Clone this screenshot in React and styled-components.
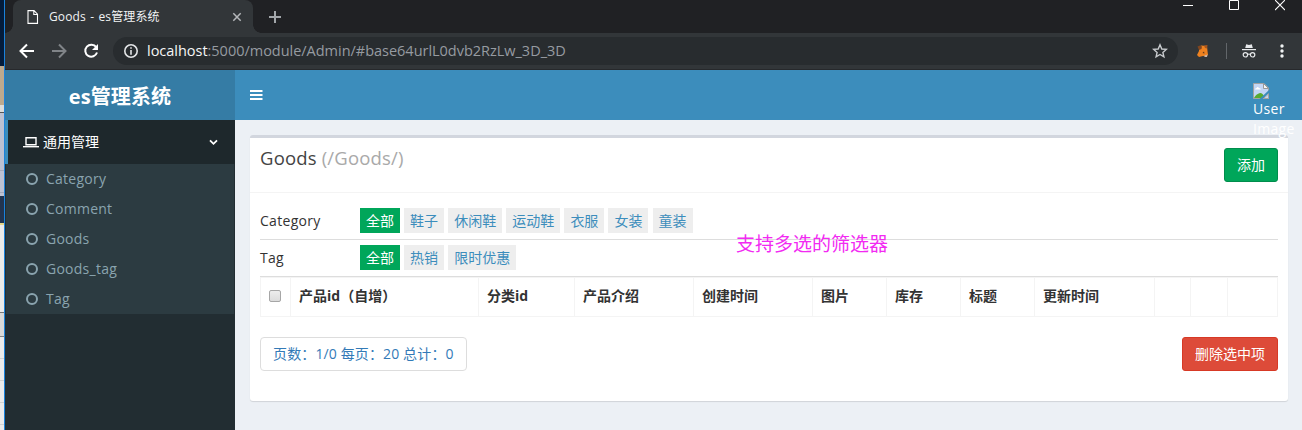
import React from "react";
import styled, { createGlobalStyle } from "styled-components";

const GlobalStyle = createGlobalStyle`
  *, *::before, *::after { box-sizing: border-box; }
  body {
    margin: 0;
    font-family: "Open Sans", "Noto Sans CJK SC", sans-serif;
    font-size: 14px;
    line-height: 20px;
    color: #333;
    overflow: hidden;
  }
`;

const Screen = styled.div`
  display: flex;
  width: 1302px;
  height: 430px;
  overflow: hidden;
`;

const Desktop = styled.div`
  width: 4px;
  flex: none;
  display: flex;
  flex-direction: column;
`;
const Strip = styled.div`
  flex: none;
  height: ${(p) => p.$h}px;
  background: ${(p) => p.$c};
`;

const Browser = styled.div`
  flex: 1;
  min-width: 0;
  border-left: 1px solid #1a82dc;
  display: flex;
  flex-direction: column;
`;

const TabBar = styled.div`
  display: flex;
  height: 33px;
  padding-left: 8px;
  background: #202124;
`;
const Tab = styled.div`
  position: relative;
  display: flex;
  align-items: center;
  width: 240px;
  padding: 0 11px 0 14px;
  background: #323639;
  border-radius: 8px 8px 0 0;
  color: #f1f3f4;
  font-size: 12px;
  &::before, &::after {
    content: "";
    position: absolute;
    bottom: 0;
    width: 8px;
    height: 8px;
  }
  &::before {
    left: -8px;
    background: radial-gradient(circle at 0 0, transparent 7.5px, #323639 8px);
  }
  &::after {
    right: -8px;
    background: radial-gradient(circle at 100% 0, transparent 7.5px, #323639 8px);
  }
`;
const TabTitle = styled.span`
  flex: 1;
  margin-left: 10px;
  white-space: nowrap;
  word-spacing: 1.2px;
  letter-spacing: 0.1px;
`;
const NewTab = styled.div`
  display: flex;
  align-items: center;
  margin-left: 16px;
`;
const WindowButtons = styled.div`
  display: flex;
  gap: 36px;
  margin-left: auto;
  padding-right: 17px;
  height: 11px;
`;

const Toolbar = styled.div`
  display: flex;
  align-items: center;
  height: 37px;
  padding: 0 12px 1px 14px;
  background: #323639;
  border-bottom: 1px solid #27292c;
`;
const NavIcons = styled.div`
  display: flex;
  gap: 16px;
  width: 94px;
`;
const Omnibox = styled.div`
  display: flex;
  align-items: center;
  width: 1065px;
  height: 28px;
  padding: 0 10px;
  border-radius: 14px;
  background: #282c2f;
  color: #969ba1;
  font-size: 14.5px;
`;
const Url = styled.span`
  flex: 1;
  margin-left: 8px;
  letter-spacing: -0.02px;
  white-space: nowrap;
`;
const Host = styled.span`
  color: #f5f6f7;
`;
const Extensions = styled.div`
  display: flex;
  align-items: center;
  flex: 1;
  padding-left: 18px;
`;
const Divider = styled.div`
  width: 1px;
  height: 16px;
  margin: 0 15px 0 16px;
  background: #62666a;
`;

const Header = styled.header`
  display: flex;
  height: 50px;
  background: #3c8dbc;
`;
const Logo = styled.div`
  width: 230px;
  background: #357ca5;
  color: #fff;
  font-size: 20px;
  font-weight: 700;
  line-height: 53px;
  text-align: center;
  letter-spacing: 0.1px;
`;
const Toggle = styled.div`
  padding: 20px 15px;
  height: 50px;
  line-height: 0;
`;
const User = styled.div`
  position: relative;
  z-index: 2;
  width: 49px;
  margin-left: auto;
  padding-top: 13px;
  color: #fff;
  letter-spacing: 0.3px;
  svg { display: block; }
  span { display: block; }
`;

const Main = styled.div`
  display: flex;
  flex: 1;
`;
const Sidebar = styled.aside`
  width: 230px;
  background: #222d32;
`;
const MenuHead = styled.div`
  display: flex;
  align-items: center;
  height: 44px;
  padding: 0 17px 0 15px;
  border-left: 3px solid #3c8dbc;
  background: #1e282c;
  color: #fff;
`;
const MenuLabel = styled.span`
  flex: 1;
  margin-left: 4px;
`;
const SubMenu = styled.div`
  margin: 0 1px;
  background: #2c3b41;
`;
const SubItem = styled.div`
  display: flex;
  align-items: center;
  gap: 8px;
  height: 30px;
  padding-left: 20px;
  color: #8aa4af;
  letter-spacing: 0.25px;
`;

const Content = styled.main`
  flex: 1;
  padding: 15px 14px 0 15px;
  background: #ecf0f5;
`;
const Box = styled.section`
  height: 266px;
  border-top: 3px solid #d2d6de;
  border-radius: 3px;
  background: #fff;
  box-shadow: 0 1px 1px rgba(0, 0, 0, 0.12);
`;
const BoxHeader = styled.div`
  display: flex;
  justify-content: space-between;
  align-items: flex-start;
  height: 55px;
  padding: 10px;
  border-bottom: 1px solid #f4f4f4;
`;
const BoxTitle = styled.h3`
  margin: 0;
  font-size: 18.5px;
  font-weight: 400;
  line-height: 19px;
  color: #444;
  letter-spacing: 0.18px;
  small { font-size: inherit; color: #a9a9a9; }
`;
const Button = styled.button`
  height: 34px;
  padding: 0 12px;
  border: 1px solid ${(p) => p.$border};
  width: ${(p) => p.$w}px;
  border-radius: 3px;
  background: ${(p) => p.$bg};
  color: #fff;
  font: inherit;
  white-space: nowrap;
`;
const BoxBody = styled.div`
  padding: 10px;
`;
const FilterRow = styled.div`
  display: flex;
  height: 37px;
  padding-top: 5px;
  border-bottom: 1px solid #ddd;
  line-height: 25px;
`;
const FilterName = styled.span`
  width: 100px;
  letter-spacing: 0.3px;
`;
const Options = styled.div`
  display: flex;
  gap: 4.1px;
`;
const Option = styled.a`
  height: 25px;
  padding: 0 6px;
  background: ${(p) => (p.$on ? "#00a65a" : "#eee")};
  color: ${(p) => (p.$on ? "#fff" : "#3c8dbc")};
`;
const Table = styled.div`
  display: grid;
  grid-template-columns: 30px 188px 96px 119px 119px 74px 74px 74px 120px 36px 37px 51px;
  height: 40px;
  border: solid #f4f4f4;
  border-width: 1px 0;
`;
const Th = styled.div`
  padding: 0 8px;
  border-left: 1px solid #f4f4f4;
  font-weight: 700;
  line-height: 36px;
  white-space: nowrap;
  &:last-child { border-right: 1px solid #f4f4f4; }
`;
const Check = styled.span`
  display: block;
  width: 12px;
  height: 12px;
  margin-top: 12px;
  border: 1px solid #a6a6a6;
  border-radius: 2px;
  background: linear-gradient(#ededed, #dcdcdc);
`;
const Footer = styled.div`
  display: flex;
  justify-content: space-between;
  margin-top: 20px;
`;
const Pager = styled.div`
  width: 207px;
  height: 34px;
  padding: 0 12px;
  border: 1px solid #ddd;
  border-radius: 4px;
  color: #337ab7;
  line-height: 32px;
  letter-spacing: 0.13px;
  white-space: nowrap;
`;
const Annotation = styled.div`
  position: absolute;
  left: 736px;
  top: 232px;
  color: #f22af2;
  font-size: 19px;
  font-weight: 400;
  line-height: 24px;
`;

const STRIPS = [
  [66, "#041c3b"], [39, "#bda98e"], [7, "#dcdcda"], [1, "#555"], [57, "#bcc1d2"],
  [1, "#a4a9ba"], [21, "#bcc1d2"], [1, "#a4a9ba"], [3, "#bcc1d2"], [27, "#22344f"],
  [2, "#e6d88a"], [87, "#ebebeb"], [1, "#777"], [23, "#d9d9d9"], [1, "#888"],
  [21, "#ebebeb"], [1, "#d2d2d2"], [21, "#ebebeb"], [1, "#d2d2d2"], [21, "#ebebeb"],
  [1, "#d2d2d2"], [21, "#ebebeb"], [1, "#d2d2d2"], [5, "#ebebeb"],
];
const MENU = ["Category", "Comment", "Goods", "Goods_tag", "Tag"];
const FILTERS = [
  ["Category", ["全部", "鞋子", "休闲鞋", "运动鞋", "衣服", "女装", "童装"]],
  ["Tag", ["全部", "热销", "限时优惠"]],
];
const COLUMNS = ["产品id（自增）", "分类id", "产品介绍", "创建时间", "图片", "库存", "标题", "更新时间", "", "", ""];

const Icon = ({ w = 16, h = w, color = "#fff", sw = 2, children }) => (
  <svg width={w} height={h} viewBox={`0 0 ${w} ${h}`} fill="none" stroke={color} strokeWidth={sw}>
    {children}
  </svg>
);

const MenuDots = styled.svg`
  margin-left: auto;
  margin-right: 6px;
`;

const BrokenImage = () => (
  <svg width="16" height="16" viewBox="0 0 16 16">
    <path d="M0.5 0.5H11L15.5 5V15.5H0.5Z" fill="#c3d6f5" stroke="#a3a3a3" />
    <path d="M2 6.500q0-1.500 1.500-1.500q1-2 2.500 0q1.800 0 1.800 1.500z" fill="#fff" />
    <path d="M1 15q2-4 6-5q3 0 5 5z" fill="#58ab32" />
    <path d="M16 7L6.500 16H9.500L16 10Z" fill="#3c8dbc" />
    <path d="M10.500 15.500L15.500 11V15.500Z" fill="#c3d6f5" stroke="#a3a3a3" />
    <path d="M10.500 0.500V5.500H15.500Z" fill="#f4f4f4" stroke="#999" />
  </svg>
);

export default function App() {
  return (
    <Screen>
      <GlobalStyle />
      <Desktop>
        {STRIPS.map(([h, c], i) => <Strip key={i} $h={h} $c={c} />)}
      </Desktop>
      <Browser>
        <TabBar>
          <Tab>
            <Icon w={12} h={14} sw={1.1}>
              <path d="M1 .6H7L10.500 4.200V13.400H1Z M6.800 .6V4.500H10.500" />
            </Icon>
            <TabTitle>Goods - es管理系统</TabTitle>
            <Icon w={10} color="#b4b7ba" sw={1.5}><path d="M1.300 1.300L8.700 8.700M8.700 1.300L1.300 8.700" /></Icon>
          </Tab>
          <NewTab><Icon w={12} color="#a2a6aa"><path d="M6 0V12M0 6H12" /></Icon></NewTab>
          <WindowButtons>
            <Icon w={10} h={11} sw={1}><path d="M0 5.500H10" /></Icon>
            <Icon w={10} h={11} sw={1}><path d="M.5 .5H9.500V9.500H.5Z" /></Icon>
            <Icon w={10} h={11} sw={1.1}><path d="M0 0L10 10M10 0L0 10" /></Icon>
          </WindowButtons>
        </TabBar>
        <Toolbar>
          <NavIcons>
            <Icon><path d="M15 8H2.500M8 1.500L1.500 8L8 14.500" /></Icon>
            <Icon color="#808488"><path d="M1 8H13.500M8 1.500L14.500 8L8 14.500" /></Icon>
            <Icon>
              <path d="M13.200 4.200A6 6 0 1 0 14 9.500" />
              <path d="M15 1V7H9Z" fill="#fff" stroke="none" />
            </Icon>
          </NavIcons>
          <Omnibox>
            <Icon color="#e3e5e7" sw={1.6}>
              <circle cx="8" cy="8" r="6.200" />
              <path d="M8 4.200V5.800M8 7V11.700" />
            </Icon>
            <Url><Host>localhost</Host>:5000/module/Admin/#base64urlL0dvb2RzLw_3D_3D</Url>
            <Icon color="#c8cbce" sw={1.4}>
              <path d="M8 1.800L9.800 6L14.300 6.400L10.900 9.400L11.900 13.800L8 11.500L4.100 13.800L5.100 9.400L1.700 6.400L6.200 6Z" />
            </Icon>
          </Omnibox>
          <Extensions>
            <svg width="14" height="14" viewBox="0 0 14 14">
              <path d="M3 3L5 1.500L11 2L11.500 7L12 11L10 12.500L7 12L3 13L1 11L3 7Z" fill="#ee8220" />
              <path d="M1.500 2.500L4 1.500L6 2.500L5.500 5L3 6Z" fill="#81461f" />
              <path d="M8 1.500L11.500 1L11 4.500L9 4Z" fill="#a8571e" />
              <path d="M6.500 9L8 7.500L8.500 9.500Z" fill="#4f3523" />
              <path d="M8.500 11.500L11.500 10.500L11 13H8.500Z" fill="#c7b5aa" />
            </svg>
            <Divider />
            <Icon w={14} h={14} color="#e6e8ea" sw={1.2}>
              <path d="M3.200 4L4.200 .3L7 1L9.800 .3L10.800 4Z" fill="#e6e8ea" stroke="none" />
              <path d="M0 5.600H14" />
              <circle cx="3.400" cy="10.800" r="2.200" />
              <circle cx="10.600" cy="10.800" r="2.200" />
              <path d="M5.600 10.400Q7 9.600 8.400 10.400" />
            </Icon>
            <MenuDots width="4" height="14" viewBox="0 0 4 14" fill="#f1f3f4">
              <circle cx="2" cy="2" r="1.700" /><circle cx="2" cy="7" r="1.700" /><circle cx="2" cy="12" r="1.700" />
            </MenuDots>
          </Extensions>
        </Toolbar>
        <Header>
          <Logo>es管理系统</Logo>
          <Toggle>
            <Icon w={13} h={10}><path d="M0 1H12.500M0 5H12.500M0 9H12.500" /></Icon>
          </Toggle>
          <User>
            <BrokenImage />
            <span>User</span>
            <span>Image</span>
          </User>
        </Header>
        <Main>
          <Sidebar>
            <MenuHead>
              <Icon w={16} h={12} sw={1.4}>
                <path d="M3 1.700H13V8.800H3Z" />
                <path d="M0 10.700H16" />
              </Icon>
              <MenuLabel>通用管理</MenuLabel>
              <Icon w={9} h={7} sw={1.8}><path d="M1 1.300L4.500 4.800L8 1.300" /></Icon>
            </MenuHead>
            <SubMenu>
              {MENU.map((name) => (
                <SubItem key={name}>
                  <Icon w={12} color="#8aa4af"><circle cx="6" cy="6" r="5" /></Icon>
                  {name}
                </SubItem>
              ))}
            </SubMenu>
          </Sidebar>
          <Content>
            <Box>
              <BoxHeader>
                <BoxTitle>Goods <small>(/Goods/)</small></BoxTitle>
                <Button $w={54} $bg="#00a65a" $border="#008d4c">添加</Button>
              </BoxHeader>
              <BoxBody>
                {FILTERS.map(([name, options]) => (
                  <FilterRow key={name}>
                    <FilterName>{name}</FilterName>
                    <Options>
                      {options.map((o, i) => <Option key={o} $on={i === 0}>{o}</Option>)}
                    </Options>
                  </FilterRow>
                ))}
                <Table>
                  <Th><Check /></Th>
                  {COLUMNS.map((c, i) => <Th key={i}>{c}</Th>)}
                </Table>
                <Footer>
                  <Pager>页数：1/0 每页：20 总计：0</Pager>
                  <Button $w={96} $bg="#dd4b39" $border="#d73925">删除选中项</Button>
                </Footer>
              </BoxBody>
            </Box>
          </Content>
        </Main>
      </Browser>
      <Annotation>支持多选的筛选器</Annotation>
    </Screen>
  );
}
